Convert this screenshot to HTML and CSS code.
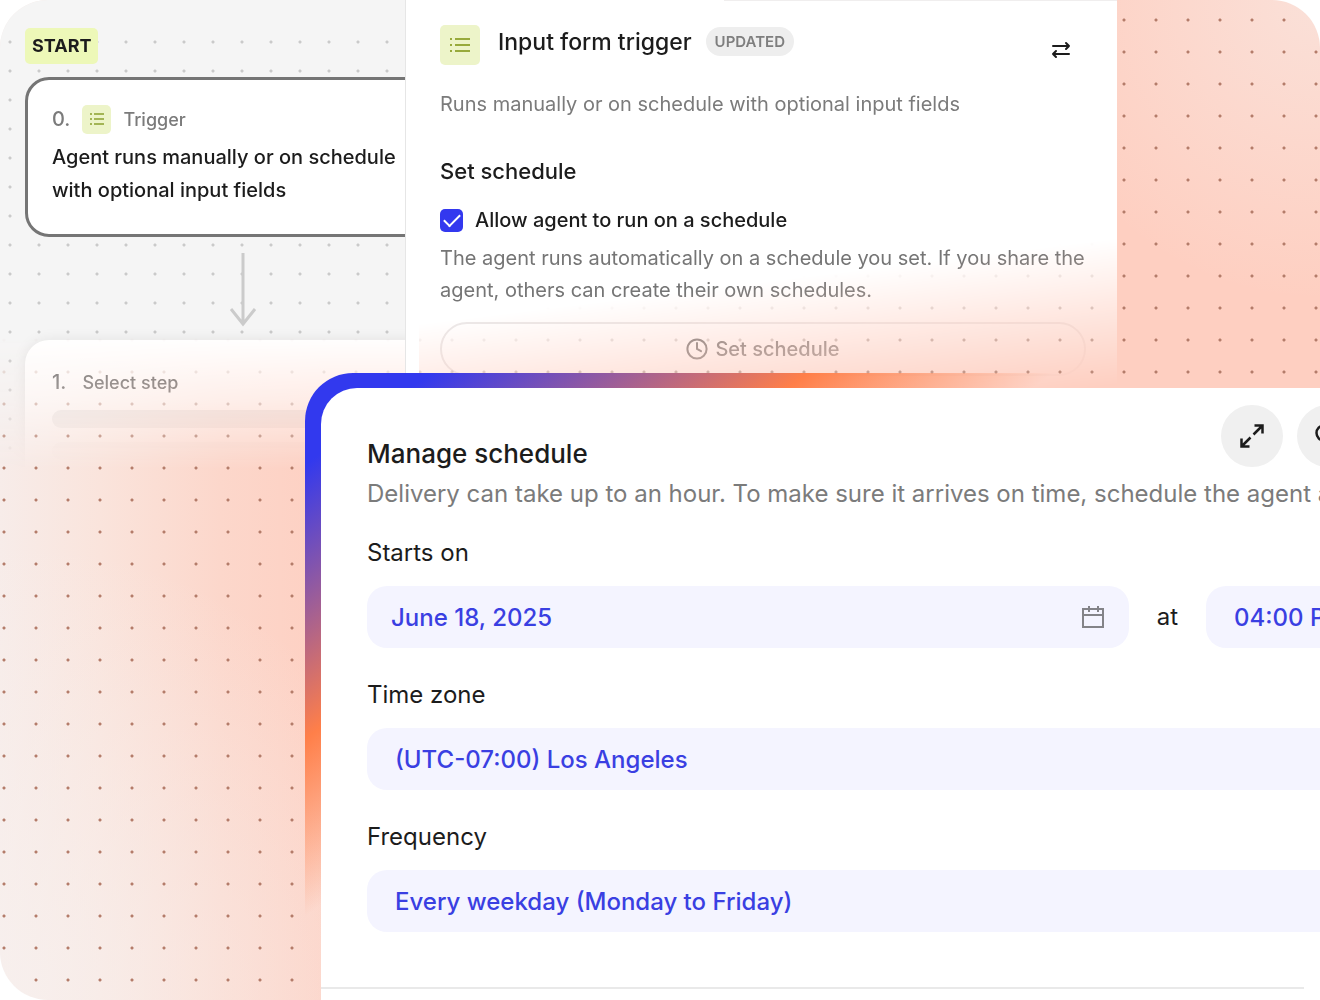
FILE: index.html
```html
<!DOCTYPE html>
<html lang="en">
<head>
<meta charset="utf-8">
<meta name="viewport" content="width=device-width, initial-scale=1">
<title>Agent schedule</title>
<link rel="stylesheet" href="styles.css">
</head>
<body>
<main class="stage">
  <div class="editor">
    <section class="canvas" aria-label="Agent steps">
      <span class="start">START</span>
      <article class="step step-active">
        <div class="step-head">
          <span class="step-number">0.</span>
          <span class="tile tile-small">
            <svg width="16" height="14" viewBox="0 0 16 14" fill="none" stroke="#a3b554" stroke-width="2"><path d="M1 2h2M5 2h10M1 7h2M5 7h10M1 12h2M5 12h10"/></svg>
          </span>
          <span class="step-kind">Trigger</span>
        </div>
        <p class="step-text">Agent runs manually or on schedule with optional input fields</p>
      </article>
      <svg class="arrow" width="28" height="74" viewBox="0 0 28 74" fill="none" stroke="#cbcbcb" stroke-width="3"><path d="M14 0v71M2 56l12 15 12-15"/></svg>
      <article class="step step-next">
        <div class="step-head">
          <span class="step-number">1.</span>
          <span class="step-kind">Select step</span>
        </div>
        <div class="bar"></div>
        <div class="bar bar-faint"></div>
      </article>
    </section>
    <section class="panel">
      <header class="panel-head">
        <span class="tile">
          <svg width="20" height="16" viewBox="0 0 20 16" fill="none" stroke="#98aa3c" stroke-width="2"><path d="M0 2h2M5 2h15M0 8h2M5 8h15M0 14h2M5 14h15"/></svg>
        </span>
        <h2 class="panel-title">Input form trigger</h2>
        <span class="badge">UPDATED</span>
        <button class="swap" type="button" aria-label="Change trigger">
          <svg width="20" height="18" viewBox="0 0 20 18" fill="none" stroke="#1c1c1c" stroke-width="2" stroke-linecap="round" stroke-linejoin="round"><path d="M2 5h16M15 2l3 3-3 3M18 13H2M5 10l-3 3 3 3"/></svg>
        </button>
      </header>
      <p class="panel-about">Runs manually or on schedule with optional input fields</p>
      <h3 class="panel-subtitle">Set schedule</h3>
      <label class="allow"><input class="tick" type="checkbox" checked>Allow agent to run on a schedule</label>
      <p class="panel-help">The agent runs automatically on a schedule you set. If you share the agent, others can create their own schedules.</p>
      <button class="set-button" type="button">
        <svg width="22" height="22" viewBox="0 0 22 22" fill="none" stroke="currentColor" stroke-width="2" stroke-linecap="round"><circle cx="11" cy="11" r="9.6"/><path d="M11 5v6l4 2.200"/></svg>
        Set schedule
      </button>
    </section>
  </div>

  <section class="dialog" aria-labelledby="dialog-title">
    <form class="sheet">
      <header class="sheet-head">
        <h1 class="sheet-title" id="dialog-title">Manage schedule</h1>
        <div class="actions">
          <button class="round" type="button" aria-label="Expand">
            <svg width="26" height="26" viewBox="0 0 26 26" fill="none" stroke="#1c1c1c" stroke-width="2.500"><path d="M15.500 2.500h8v8M23.500 2.500l-9 9M2.500 15.500v8h8M2.500 23.500l9-9"/></svg>
          </button>
          <button class="round" type="button" aria-label="Search">
            <svg width="28" height="28" viewBox="0 0 28 28" fill="none" stroke="#1c1c1c" stroke-width="2.500"><circle cx="10" cy="11" r="7.500"/><path d="M16 17l8 8"/></svg>
          </button>
        </div>
      </header>
      <p class="sheet-about">Delivery can take up to an hour. To make sure it arrives on time, schedule the agent an hour early.</p>
      <div class="field">
        <label class="label" for="date">Starts on</label>
        <div class="when">
          <div class="date-box">
            <input class="date-input" id="date" type="text" value="June 18, 2025">
            <svg width="24" height="24" viewBox="0 0 24 24" fill="none" stroke="#838388" stroke-width="2"><path d="M2 4h20v18H2zM2 10h20M8 1v6M17 1v6"/></svg>
          </div>
          <label class="at" for="time">at</label>
          <input class="control" id="time" type="text" value="04:00 PM">
        </div>
      </div>
      <div class="field">
        <label class="label" for="zone">Time zone</label>
        <select class="control" id="zone"><option>(UTC-07:00) Los Angeles</option></select>
      </div>
      <div class="field">
        <label class="label" for="frequency">Frequency</label>
        <select class="control" id="frequency"><option>Every weekday (Monday to Friday)</option></select>
      </div>
      <footer class="sheet-foot"></footer>
    </form>
  </section>
</main>
</body>
</html>
```
FILE: styles.css
```css
* { box-sizing: border-box; }

body {
  margin: 0;
  background: #fff;
  color: #1c1c1c;
  font-family: Inter, "Liberation Sans", sans-serif;
  font-size: 20px;
}

h1, h2, h3, p { margin: 0; font-weight: 500; }
button, input, select { font: inherit; color: inherit; }
button { border: 0; padding: 0; cursor: pointer; }
svg { flex: none; display: block; }

/* Peach backdrop with a 32px grid of dots */
.stage {
  display: grid;
  grid-template-columns: minmax(0, 1fr);
  min-height: 100vh;
  overflow: hidden;
  border-radius: 48px 48px 0 48px;
  background:
    radial-gradient(circle at 4px 20px, #b47c6a 1px, transparent 2px) 0 0 / 32px 32px,
    radial-gradient(circle at 100% 0, rgba(248, 236, 232, 0.6), rgba(248, 236, 232, 0) 300px),
    radial-gradient(circle at 0 100%, rgba(247, 240, 238, 0.85), rgba(247, 240, 238, 0) 460px),
    linear-gradient(90deg, #f7ece9, #fae4dc 100px, #fcd7cb 220px, #fecfc1 340px);
}

.editor, .dialog { grid-area: 1 / 1; }

.editor {
  display: flex;
  align-self: start;
  height: 480px;
}

/* Step canvas */
.canvas {
  flex: 0 0 405px;
  display: flex;
  flex-direction: column;
  align-items: flex-start;
  overflow: hidden;
  padding: 28px 0 0 25px;
  background:
    linear-gradient(#f5f5f5, #f5f5f5) 0 0 / 100% 28px no-repeat,
    radial-gradient(circle at 10px 13px, #cacaca 1px, transparent 2px) 0 0 / 29px 29px,
    #f5f5f5;
  mask-image: linear-gradient(#000 335px, rgba(0, 0, 0, 0.6) 400px, transparent 470px);
}

.start {
  padding: 0 7px;
  border-radius: 5px;
  background: #edf8b8;
  font-size: 18px;
  font-weight: 700;
  line-height: 36px;
}

.step {
  flex: none;
  width: 436px;
  padding: 25px 40px 27px 24px;
  border-radius: 24px;
  background: #fff;
}

.step-active { margin-top: 13px; border: 3px solid #757575; }

.step-next {
  padding: 28px 0 40px 27px;
  box-shadow: 0 0 14px rgba(0, 0, 0, 0.08);
}

.step-head {
  display: flex;
  align-items: center;
  gap: 12px;
  height: 28px;
  color: #7b7b7b;
  font-size: 18px;
  font-weight: 500;
}

.step-next .step-head { gap: 16px; color: #6e6e6e; }

.step-number { font-size: 20px; }

.step-text { margin-top: 8px; line-height: 33px; }

.tile {
  flex: none;
  display: grid;
  place-items: center;
  width: 40px;
  height: 40px;
  border-radius: 5px;
  background: #edf4c9;
}

.tile-small { width: 29px; height: 29px; }

.arrow { margin: 16px 0 13px 204px; }

.bar {
  height: 18px;
  margin-top: 14px;
  border-radius: 9px;
  background: #ececec;
}

.bar-faint { opacity: 0.4; }

/* Trigger settings panel */
.panel {
  flex: 0 1 712px;
  min-width: 0;
  padding: 25px 31px 0 34px;
  border-left: 1px solid #e6e6e6;
  background: linear-gradient(#f0eeee, #f0eeee) right top / 393px 1px no-repeat #fff;
  mask-image:
    linear-gradient(#000, #000),
    linear-gradient(173deg, #000 322px, rgba(0, 0, 0, 0.5) 395px, transparent 470px);
  mask-size: 14px 100%, 100% 100%;
  mask-repeat: no-repeat;
}

.panel-head {
  display: flex;
  align-items: flex-start;
  height: 50px;
}

.panel-title {
  margin-left: 18px;
  font-size: 23px;
  line-height: 34px;
}

.badge {
  margin: 2px 0 0 14px;
  padding: 0 9px;
  border-radius: 15px;
  background: #eee;
  color: #7e7e7e;
  font-size: 15px;
  font-weight: 600;
  line-height: 29px;
}

.swap {
  display: grid;
  place-items: center;
  width: 50px;
  height: 50px;
  margin-left: auto;
  background: none;
}

.panel-about {
  margin-top: 14px;
  color: #7b7b7b;
  font-weight: 400;
  line-height: 30px;
}

.panel-subtitle { margin-top: 37px; font-size: 22px; line-height: 30px; }

.allow {
  display: flex;
  align-items: center;
  gap: 12px;
  margin-top: 19px;
  font-weight: 500;
  line-height: 30px;
}

.tick {
  appearance: none;
  width: 23px;
  height: 23px;
  margin: 0;
  border-radius: 5px;
  background: #3338ef;
  display: grid;
  place-items: center;
}

.tick:checked::before {
  content: "";
  width: 14px;
  height: 7px;
  border: solid #fff;
  border-width: 0 0 2px 2px;
  transform: translateY(-2px) rotate(-45deg);
}

.panel-help {
  margin-top: 7px;
  color: #757575;
  font-weight: 400;
  line-height: 32px;
}

.set-button {
  display: flex;
  align-items: center;
  justify-content: center;
  gap: 7px;
  width: 100%;
  height: 54px;
  margin-top: 16px;
  border: 2px solid #ebe8e8;
  border-radius: 27px;
  background: none;
  color: #757575;
  font-weight: 500;
}

/* Schedule dialog: the gradient shows through as its top and left edge */
.dialog {
  z-index: 1;
  display: flex;
  margin: 373px 0 0 305px;
  padding: 15px 0 0 16px;
  border-radius: 48px 0 0 0;
  background: linear-gradient(144deg, #3239ee 74px, #ff7f49 296px, rgba(255, 127, 73, 0) 440px);
}

.sheet {
  flex: 1;
  min-width: 0;
  overflow: hidden;
  padding: 17px 0 0 46px;
  border-radius: 36px 0 0 0;
  background: #fff;
}

.sheet-head {
  display: flex;
  justify-content: space-between;
  align-items: flex-end;
  height: 62px;
  margin-right: -39px;
}

.sheet-title { font-size: 26px; line-height: 26px; }

.actions { display: flex; gap: 14px; }

.round {
  display: grid;
  place-items: center;
  width: 62px;
  height: 62px;
  border-radius: 50%;
  background: #f0f0f0;
}

.sheet-about {
  margin: 8px 0 24px;
  color: #7b7b7b;
  font-size: 24px;
  font-weight: 400;
  line-height: 38px;
  white-space: nowrap;
}

.field {
  display: grid;
  gap: 17px;
  margin: 0 -126px 31px 0;
}

.label, .at { font-size: 24px; line-height: 32px; }

.when {
  display: grid;
  grid-template-columns: minmax(0, 1fr) auto 240px;
  align-items: center;
  gap: 28px;
}

.control, .date-box {
  width: 100%;
  height: 62px;
  border: 0;
  border-radius: 20px;
  background: #f4f4ff;
  color: #3a3fe2;
  font-size: 24px;
  font-weight: 500;
}

.control { appearance: none; padding: 0 28px; }

.date-box { display: flex; align-items: center; padding: 0 24px; }

.date-input {
  flex: 1;
  min-width: 0;
  padding: 0;
  border: 0;
  background: none;
}

.sheet-foot {
  height: 12px;
  margin: 55px 16px 0 -46px;
  border-top: 2px solid #e9e9e9;
}
```
